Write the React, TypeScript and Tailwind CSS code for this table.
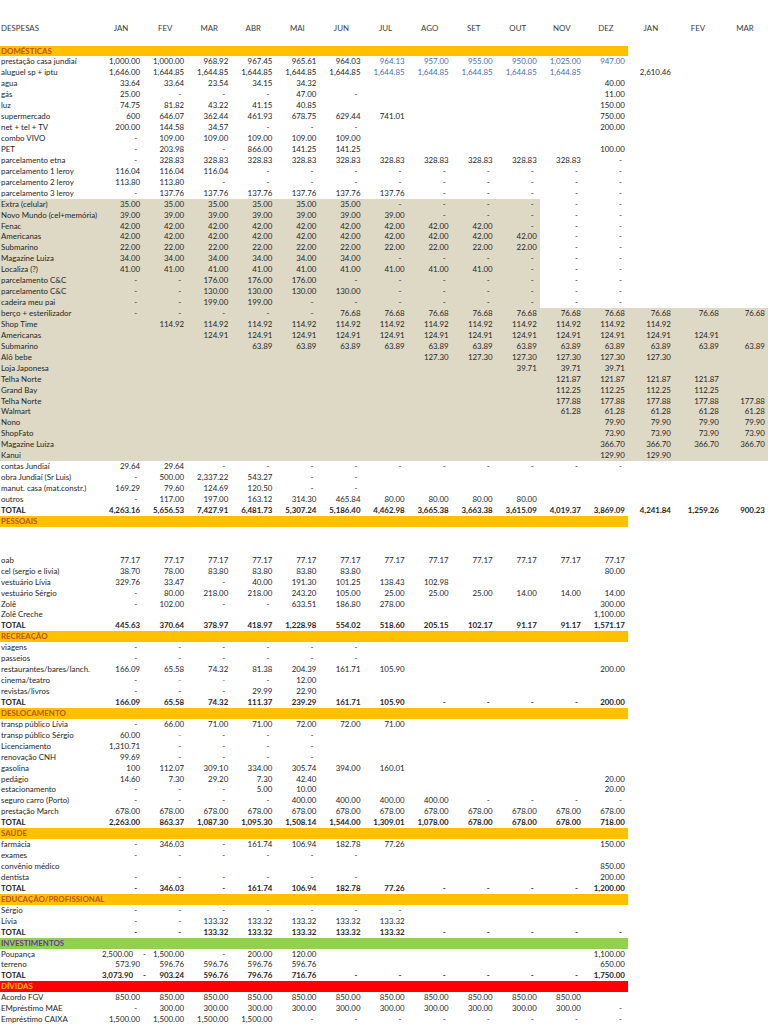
const COLS = 'grid grid-cols-[99px_repeat(12,44.08px)_46px_48px_46px]';

const x = (v: string, n: number) => Array(n).fill(v).join(' ');
const e = (n: number) => x('_', n);

type Row =
  | { k: 'sec'; label: string; tone: 'yellow' | 'green' | 'red' }
  | { k: 'row'; label: string; v: string; bold?: boolean; beige?: 'part' | 'full' }
  | { k: 'gap' };

const sec = (label: string, tone: 'yellow' | 'green' | 'red' = 'yellow'): Row => ({ k: 'sec', label, tone });
const r = (label: string, v: string, beige?: 'part' | 'full'): Row => ({ k: 'row', label, v, beige });
const tot = (v: string): Row => ({ k: 'row', label: 'TOTAL', v, bold: true });

const rows: Row[] = [
  sec('DOMÉSTICAS'),
  r('prestação casa jundiaí', '1,000.00 1,000.00 968.92 967.45 965.61 964.03 ~964.13 ~957.00 ~955.00 ~950.00 ~1,025.00 ~947.00'),
  r('aluguel sp + iptu', `1,646.00 ${x('1,644.85', 5)} ${x('~1,644.85', 5)} _ 2,610.46`),
  r('agua', `33.64 33.64 23.54 34.15 34.32 ${e(6)} 40.00`),
  r('gás', `25.00 - - - 47.00 - ${e(5)} 11.00`),
  r('luz', `74.75 81.82 43.22 41.15 40.85 ${e(6)} 150.00`),
  r('supermercado', `600 646.07 362.44 461.93 678.75 629.44 741.01 ${e(4)} 750.00`),
  r('net + tel + TV', `200.00 144.58 34.57 - - - ${e(5)} 200.00`),
  r('combo VIVO', `- ${x('109.00', 5)}`),
  r('PET', `- 203.98 - 866.00 141.25 141.25 ${e(5)} 100.00`),
  r('parcelamento etna', `- ${x('328.83', 10)} -`),
  r('parcelamento 1 leroy', `${x('116.04', 3)} ${x('-', 9)}`),
  r('parcelamento 2 leroy', `${x('113.80', 2)} ${x('-', 10)}`),
  r('parcelamento 3 leroy', `- ${x('137.76', 6)} ${x('-', 5)}`),
  r('Extra (celular)', `${x('35.00', 6)} ${x('-', 6)}`, 'part'),
  r('Novo Mundo (cel+memória)', `${x('39.00', 7)} ${x('-', 5)}`, 'part'),
  r('Fenac', `${x('42.00', 9)} ${x('-', 3)}`, 'part'),
  r('Americanas', `${x('42.00', 10)} ${x('-', 2)}`, 'part'),
  r('Submarino', `${x('22.00', 10)} ${x('-', 2)}`, 'part'),
  r('Magazine Luiza', `${x('34.00', 6)} ${x('-', 6)}`, 'part'),
  r('Localiza (?)', `${x('41.00', 9)} ${x('-', 3)}`, 'part'),
  r('parcelamento C&C', `- - ${x('176.00', 3)} ${x('-', 7)}`, 'part'),
  r('parcelamento C&C', `- - ${x('130.00', 4)} ${x('-', 6)}`, 'part'),
  r('cadeira meu pai', `- - ${x('199.00', 2)} ${x('-', 8)}`, 'part'),
  r('berço + esterilizador', `${x('-', 5)} ${x('76.68', 10)}`, 'full'),
  r('Shop Time', `_ ${x('114.92', 12)}`, 'full'),
  r('Americanas', `${e(2)} ${x('124.91', 12)}`, 'full'),
  r('Submarino', `${e(3)} ${x('63.89', 12)}`, 'full'),
  r('Alô bebe', `${e(7)} ${x('127.30', 6)}`, 'full'),
  r('Loja Japonesa', `${e(9)} ${x('39.71', 3)}`, 'full'),
  r('Telha Norte', `${e(10)} ${x('121.87', 4)}`, 'full'),
  r('Grand Bay', `${e(10)} ${x('112.25', 4)}`, 'full'),
  r('Telha Norte', `${e(10)} ${x('177.88', 5)}`, 'full'),
  r('Walmart', `${e(10)} ${x('61.28', 5)}`, 'full'),
  r('Nono', `${e(11)} ${x('79.90', 4)}`, 'full'),
  r('ShopFato', `${e(11)} ${x('73.90', 4)}`, 'full'),
  r('Magazine Luiza', `${e(11)} ${x('366.70', 4)}`, 'full'),
  r('Kanui', `${e(11)} ${x('129.90', 2)}`, 'full'),
  r('contas Jundiaí', `29.64 29.64 ${x('-', 10)}`),
  r('obra Jundiaí (Sr Luis)', '- 500.00 2,337.22 543.27 - -'),
  r('manut. casa (mat.constr.)', '169.29 79.60 124.69 120.50 - -'),
  r('outros', `- 117.00 197.00 163.12 314.30 465.84 ${x('80.00', 4)}`),
  tot('4,263.16 5,656.53 7,427.91 6,481.73 5,307.24 5,186.40 4,462.98 3,665.38 3,663.38 3,615.09 4,019.37 3,869.09 4,241.84 1,259.26 900.23'),
  sec('PESSOAIS'),
  { k: 'gap' },
  r('oab', x('77.17', 12)),
  r('cel (sergio e livia)', `38.70 78.00 ${x('83.80', 4)} ${e(5)} 80.00`),
  r('vestuário Lívia', '329.76 33.47 - 40.00 191.30 101.25 138.43 102.98'),
  r('vestuário Sérgio', '- 80.00 218.00 218.00 243.20 105.00 25.00 25.00 25.00 14.00 14.00 14.00'),
  r('Zolê', `- 102.00 - - 633.51 186.80 278.00 ${e(4)} 300.00`),
  r('Zolê Creche', `${e(11)} 1,100.00`),
  tot('445.63 370.64 378.97 418.97 1,228.98 554.02 518.60 205.15 102.17 91.17 91.17 1,571.17'),
  sec('RECREAÇÃO'),
  r('viagens', x('-', 6)),
  r('passeios', x('-', 6)),
  r('restaurantes/bares/lanch.', `166.09 65.58 74.32 81.38 204.39 161.71 105.90 ${e(4)} 200.00`),
  r('cinema/teatro', '- ~- ~- - 12.00'),
  r('revistas/livros', '- - - 29.99 22.90'),
  tot(`166.09 65.58 74.32 111.37 239.29 161.71 105.90 ${x('-', 4)} 200.00`),
  sec('DESLOCAMENTO'),
  r('transp público Lívia', '- 66.00 71.00 71.00 72.00 72.00 71.00'),
  r('transp público Sérgio', '60.00 ~- - - -'),
  r('Licenciamento', '1,310.71 - - - -'),
  r('renovação CNH', '99.69 - - - -'),
  r('gasolina', '100 112.07 309.10 334.00 305.74 394.00 160.01'),
  r('pedágio', `14.60 7.30 29.20 7.30 42.40 ${e(6)} 20.00`),
  r('estacionamento', `- - - 5.00 10.00 ${e(6)} 20.00`),
  r('seguro carro (Porto)', `- - - - ${x('400.00', 4)} ${x('-', 4)}`),
  r('prestação March', x('678.00', 12)),
  tot('2,263.00 863.37 1,087.30 1,095.30 1,508.14 1,544.00 1,309.01 1,078.00 678.00 678.00 678.00 718.00'),
  sec('SAÚDE'),
  r('farmácia', `- 346.03 - 161.74 106.94 182.78 77.26 ${e(4)} 150.00`),
  r('exames', x('-', 6)),
  r('convênio médico', `${e(11)} 850.00`),
  r('dentista', `${x('-', 6)} ${e(5)} 200.00`),
  tot(`- 346.03 - 161.74 106.94 182.78 77.26 ${x('-', 4)} 1,200.00`),
  sec('EDUCAÇÃO/PROFISSIONAL'),
  r('Sérgio', x('-', 7)),
  r('Lívia', `- - ${x('133.32', 5)}`),
  tot(`- - ${x('133.32', 5)} ${x('-', 5)}`),
  sec('INVESTIMENTOS', 'green'),
  r('Poupança', `^2,500.00 !1,500.00 - 200.00 120.00 ${e(6)} 1,100.00`),
  r('terreno', `573.90 ${x('596.76', 4)} ${e(6)} 650.00`),
  tot(`^3,073.90 !903.24 596.76 796.76 716.76 ${x('-', 6)} 1,750.00`),
  sec('DÍVIDAS', 'red'),
  r('Acordo FGV', x('850.00', 11)),
  r('EMpréstimo MAE', `- ${x('300.00', 10)} -`),
  r('Empréstimo CAIXA', `${x('1,500.00', 4)} ${x('-', 8)}`),
];

const heads = ['JAN', 'FEV', 'MAR', 'ABR', 'MAI', 'JUN', 'JUL', 'AGO', 'SET', 'OUT', 'NOV', 'DEZ', 'JAN', 'FEV', 'MAR'];

function Cell({ v, beige }: { v: string; beige: boolean }) {
  const bg = beige ? 'bg-[#ddd9c4]' : '';
  if (!v || v === '_') return <div className={bg} />;
  const blue = v.startsWith('~');
  const t = blue ? v.slice(1) : v;
  const color = blue ? 'text-[#4a6db3]' : '';
  if (t === '-') return <div className={`${bg} ${color} text-right pr-[6px]`}>-</div>;
  if (t.startsWith('!'))
    return (
      <div className={`${bg} flex justify-between pr-[3px]`}>
        <span>-</span>
        <span>{t.slice(1)}</span>
      </div>
    );
  if (t.startsWith('^')) return <div className={`${bg} text-right pr-[10px] whitespace-nowrap`}>{t.slice(1)}</div>;
  return <div className={`${bg} ${color} text-right pr-[3px] whitespace-nowrap`}>{t}</div>;
}

function Line({ row }: { row: Row }) {
  if (row.k === 'gap') return <div className="h-[28px]" />;
  if (row.k === 'sec') {
    const tone =
      row.tone === 'green'
        ? 'bg-[#92d050] text-[#7030a0]'
        : row.tone === 'red'
          ? 'bg-[#ff0000] text-[#ffc000]'
          : 'bg-[#ffc000] text-[#c0501a]';
    return <div className={`w-[628px] h-[10.94px] pl-[1px] font-bold ${tone}`}>{row.label}</div>;
  }
  const vals = row.v.split(' ');
  return (
    <div className={`${COLS} h-[10.94px] ${row.bold ? 'font-bold' : ''} ${row.beige === 'full' ? 'bg-[#ddd9c4]' : ''}`}>
      <div className={`pl-[1px] whitespace-nowrap ${row.beige === 'part' ? 'bg-[#ddd9c4]' : ''}`}>{row.label}</div>
      {heads.map((_, i) => (
        <Cell key={i} v={vals[i] ?? ''} beige={row.beige === 'part' && i < 10} />
      ))}
    </div>
  );
}

export default function App() {
  return (
    <div className="w-[768px] h-[1024px] overflow-hidden bg-white text-[#262626] text-[7.9px] leading-[10.94px] font-['Lato','Liberation_Sans',sans-serif]">
      <div className={`${COLS} h-[45.5px] pt-[22.5px] text-[#3a3a3a]`}>
        <div className="pl-[1px]">DESPESAS</div>
        {heads.map((h, i) => (
          <div key={i} className="text-center">
            {h}
          </div>
        ))}
      </div>
      {rows.map((row, i) => (
        <Line key={i} row={row} />
      ))}
    </div>
  );
}
